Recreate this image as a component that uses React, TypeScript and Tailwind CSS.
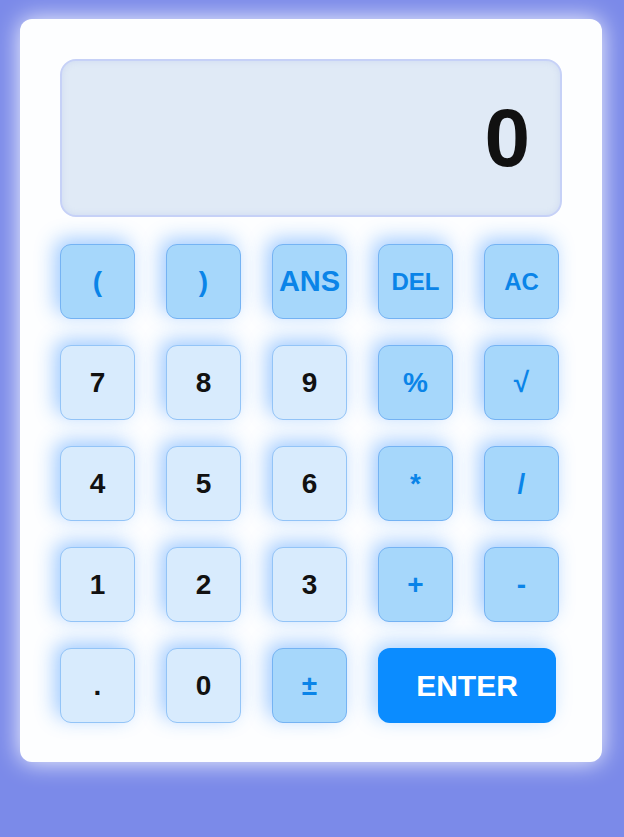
type Key = {
  label: string;
  kind: "num" | "op" | "enter";
  size?: string;
};

const keys: Key[] = [
  { label: "(", kind: "op", size: "text-[28px]" },
  { label: ")", kind: "op", size: "text-[28px]" },
  { label: "ANS", kind: "op", size: "text-[29px]" },
  { label: "DEL", kind: "op", size: "text-[24px]" },
  { label: "AC", kind: "op", size: "text-[24px]" },
  { label: "7", kind: "num" },
  { label: "8", kind: "num" },
  { label: "9", kind: "num" },
  { label: "%", kind: "op" },
  { label: "√", kind: "op" },
  { label: "4", kind: "num" },
  { label: "5", kind: "num" },
  { label: "6", kind: "num" },
  { label: "*", kind: "op" },
  { label: "/", kind: "op" },
  { label: "1", kind: "num" },
  { label: "2", kind: "num" },
  { label: "3", kind: "num" },
  { label: "+", kind: "op" },
  { label: "-", kind: "op" },
  { label: ".", kind: "num" },
  { label: "0", kind: "num" },
  { label: "±", kind: "op" },
  { label: "ENTER", kind: "enter" },
];

function CalcKey({ k }: { k: Key }) {
  if (k.kind === "enter") {
    return (
      <button className="col-span-2 w-[178px] h-[75px] rounded-[12px] bg-[#0b8cff] text-white font-bold text-[30px] shadow-[-5px_-5px_20px_rgba(20,130,255,0.35)]">
        {k.label}
      </button>
    );
  }
  const base =
    "w-[75px] h-[75px] rounded-[11px] border font-bold flex items-center justify-center shadow-[-5px_-5px_20px_rgba(30,130,255,0.42)]";
  const look =
    k.kind === "num"
      ? "bg-[#d8ebfd] border-[#93c4f7] text-[#111]"
      : "bg-[#a6d7fb] border-[#75b3f3] text-[#0a84e8]";
  return (
    <button className={`${base} ${look} ${k.size ?? "text-[28px]"}`}>
      {k.label}
    </button>
  );
}

export default function App() {
  return (
    <div className="min-h-screen bg-[#7b8ae9] pt-[19px] pl-[20px] font-['Liberation_Sans',Arial,sans-serif]">
      <div className="w-[582px] h-[743px] bg-[#fdfeff] rounded-[12px] shadow-[0_0_24px_rgba(255,255,255,0.95)] px-[40px] pt-[40px]">
        <div className="w-[502px] h-[158px] rounded-[16px] bg-[#e0eaf6] border-2 border-[#c6d1f7] flex items-center justify-end pr-[30px] shadow-[inset_0_0_6px_rgba(150,170,230,0.25)]">
          <span className="text-[82px] font-bold text-[#111] leading-none">0</span>
        </div>
        <div className="mt-[27px] grid grid-cols-[repeat(5,75px)] gap-x-[31px] gap-y-[26px]">
          {keys.map((k) => (
            <CalcKey key={k.label} k={k} />
          ))}
        </div>
      </div>
    </div>
  );
}
